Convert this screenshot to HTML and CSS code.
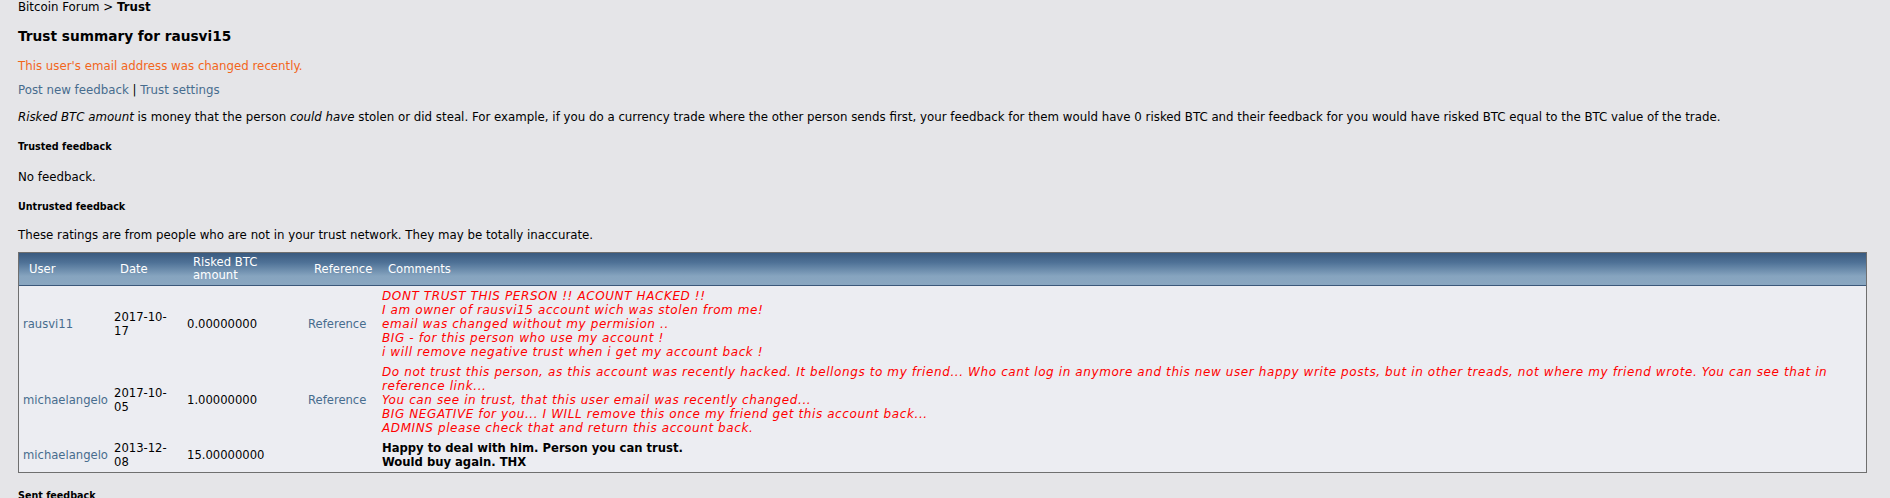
FILE: index.html
```html
<!DOCTYPE html>
<html lang="en">
<head>
<meta charset="UTF-8">
<title>Trust summary for rausvi15</title>
<link rel="stylesheet" href="styles.css">
</head>
<body>
<div class="crumb"><a href="#">Bitcoin Forum</a> &gt; <b>Trust</b></div>
<h2 class="title">Trust summary for rausvi15</h2>
<p class="notice">This user's email address was changed recently.</p>
<p class="links"><a href="#">Post new feedback</a> | <a href="#">Trust settings</a></p>
<p class="note"><i>Risked BTC amount</i> is money that the person <i>could have</i> stolen or did steal. For example, if you do a currency trade where the other person sends first, your feedback for them would have 0 risked BTC and their feedback for you would have risked BTC equal to the BTC value of the trade.</p>

<h3 class="sub">Trusted feedback</h3>
<p class="plain">No feedback.</p>

<h3 class="sub">Untrusted feedback</h3>
<p class="plain last">These ratings are from people who are not in your trust network. They may be totally inaccurate.</p>

<table class="feedback">
  <colgroup>
    <col class="c-user">
    <col class="c-date">
    <col class="c-risk">
    <col class="c-ref">
    <col>
  </colgroup>
  <tr>
    <th>User</th>
    <th>Date</th>
    <th>Risked BTC amount</th>
    <th>Reference</th>
    <th>Comments</th>
  </tr>
  <tr>
    <td><a href="#">rausvi11</a></td>
    <td>2017-10-17</td>
    <td>0.00000000</td>
    <td><a href="#">Reference</a></td>
    <td class="bad">DONT TRUST THIS PERSON !! ACOUNT HACKED !!<br>I am owner of rausvi15 account wich was stolen from me!<br>email was changed without my permision ..<br>BIG - for this person who use my account !<br>i will remove negative trust when i get my account back !</td>
  </tr>
  <tr>
    <td><a href="#">michaelangelo</a></td>
    <td>2017-10-05</td>
    <td>1.00000000</td>
    <td><a href="#">Reference</a></td>
    <td class="bad">Do not trust this person, as this account was recently hacked. It bellongs to my friend... Who cant log in anymore and this new user happy write posts, but in other treads, not where my friend wrote. You can see that in reference link...<br>You can see in trust, that this user email was recently changed...<br>BIG NEGATIVE for you... I WILL remove this once my friend get this account back...<br>ADMINS please check that and return this account back.</td>
  </tr>
  <tr>
    <td><a href="#">michaelangelo</a></td>
    <td>2013-12-08</td>
    <td>15.00000000</td>
    <td></td>
    <td class="good">Happy to deal with him. Person you can trust.<br>Would buy again. THX</td>
  </tr>
</table>

<h3 class="sub">Sent feedback</h3>
</body>
</html>
```

FILE: styles.css
```css
body {
  margin: 0;
  padding: 0 23px 0 18px;
  background: #e5e5e8;
  font-family: "DejaVu Sans", Verdana, sans-serif;
  font-size: 11.8px;
  line-height: 14px;
  color: #000;
}
a {
  color: #476c8e;
  text-decoration: none;
}
p {
  margin: 0;
}
.crumb {
  height: 14px;
}
.crumb a {
  color: #000;
}
.title {
  font-size: 13.7px;
  line-height: 17px;
  margin: 14px 0 0;
}
.notice {
  color: #f2661c;
  margin-top: 14px;
}
.links {
  margin-top: 10px;
}
.note {
  margin-top: 13px;
}
.sub {
  font-size: 9.6px;
  line-height: 12px;
  margin: 17px 0 0;
}
.plain {
  margin-top: 17px;
}
.plain.last {
  margin-top: 15px;
}
/* feedback table */
.feedback {
  width: 100%;
  margin-top: 10px;
  border: 1px solid #6f6f6f;
  border-spacing: 0;
  table-layout: fixed;
  background: #ecedf2;
  font-size: 11.6px;
}
.c-user { width: 91px; }
.c-date { width: 73px; }
.c-risk { width: 121px; }
.c-ref { width: 74px; }
.feedback th {
  height: 32px;
  padding: 0 4px 0 10px;
  text-align: left;
  font-weight: normal;
  line-height: 13px;
  color: #fff;
  background: linear-gradient(#395a7f, #4f7297 30%, #86a4bf 72%, #8aa7c1);
  border-bottom: 1px solid #3b587a;
}
.feedback td {
  padding: 3px 4px;
  vertical-align: middle;
}
.bad {
  color: #f00;
  font-style: italic;
  font-size: 12px;
  letter-spacing: 0.6px;
}
.good {
  font-weight: bold;
}
```
